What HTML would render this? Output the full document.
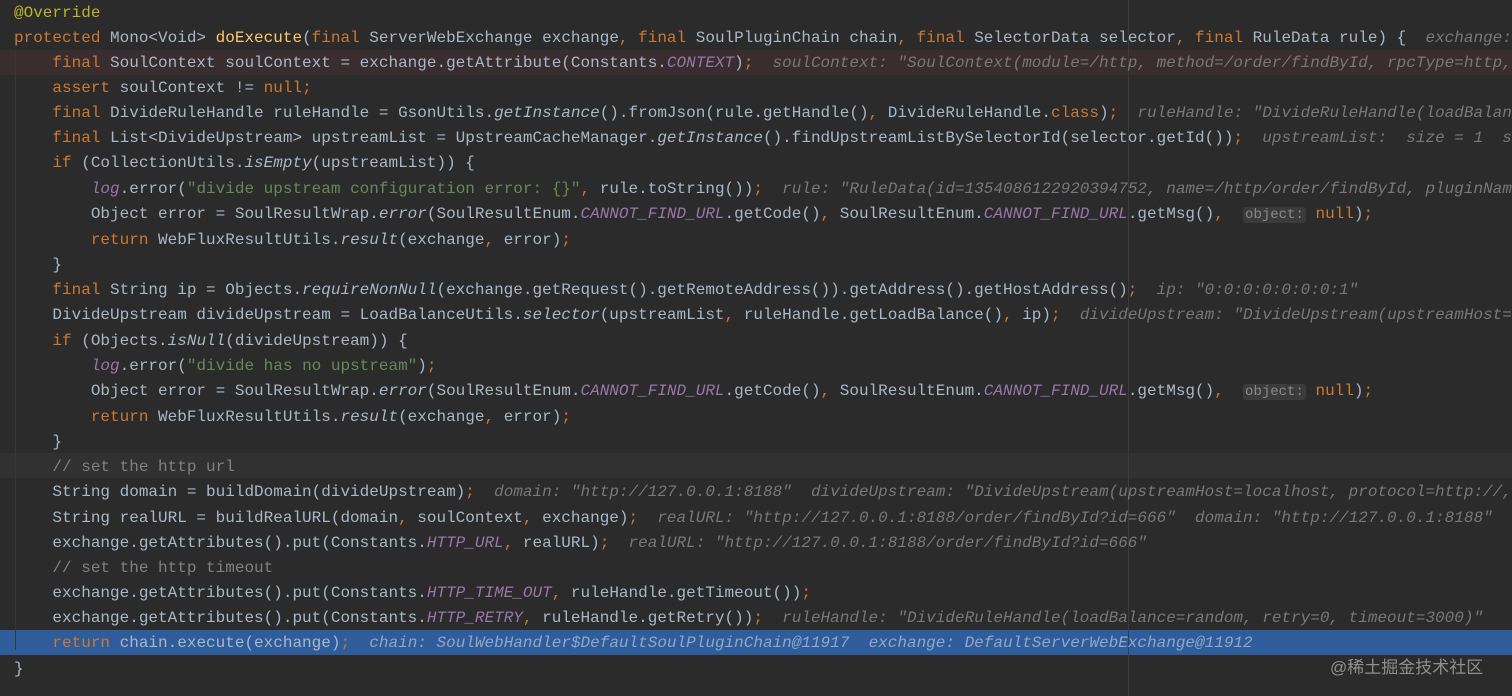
<!DOCTYPE html>
<html><head><meta charset="utf-8"><style>
html,body{margin:0;padding:0;background:#2b2b2b;width:1512px;height:696px;overflow:hidden}
.wrap{position:relative;width:1512px;height:696px}
pre{margin:0;position:absolute;left:14px;top:0.5px;font-family:"Liberation Mono","DejaVu Sans Mono",monospace;font-size:16px;line-height:25.15px;color:#a9b7c6;white-space:pre}
.k{color:#cc7832}.a{color:#bbb529}.m{color:#ffc66d}.s{color:#6a8759}.i{font-style:italic}
.c{color:#9876aa;font-style:italic}.cm{color:#808080}.h{color:#787878;font-style:italic}
.o{background:#3b3b3b;color:#8a8a8a;border-radius:3px;font-size:14px;padding:0 2px}
.band{position:absolute;left:0;width:1512px;height:25px}
.wm{position:absolute;left:1330px;top:653px;color:#8e8e8e;font-family:"Liberation Sans","Noto Sans CJK SC",sans-serif;font-size:17px}
</style></head><body><div class="wrap">
<div class="band" style="top:50px;background:#3a2d2f"></div>
<div class="band" style="top:453px;background:#313131"></div>
<div class="band" style="top:630px;background:#2f5d9c"></div>
<div style="position:absolute;left:1128px;top:0;width:1px;height:696px;background:#3c3c3c"></div>
<div style="position:absolute;left:15px;top:50px;width:1px;height:600px;background:#373737"></div>
<pre><span class="a">@Override</span>
<span class="k">protected </span>Mono&lt;Void&gt; <span class="m">doExecute</span>(<span class="k">final </span>ServerWebExchange exchange<span class="k">, final </span>SoulPluginChain chain<span class="k">, final </span>SelectorData selector<span class="k">, final </span>RuleData rule) {  <span class="h">exchange: </span>
    <span class="k">final </span>SoulContext soulContext = exchange.getAttribute(Constants.<span class="c">CONTEXT</span>)<span class="k">;</span>  <span class="h">soulContext: "SoulContext(module=/http, method=/order/findById, rpcType=http, </span>
    <span class="k">assert </span>soulContext != <span class="k">null;</span>
    <span class="k">final </span>DivideRuleHandle ruleHandle = GsonUtils.<span class="i">getInstance</span>().fromJson(rule.getHandle()<span class="k">, </span>DivideRuleHandle.<span class="k">class</span>)<span class="k">;</span>  <span class="h">ruleHandle: "DivideRuleHandle(loadBalan</span>
    <span class="k">final </span>List&lt;DivideUpstream&gt; upstreamList = UpstreamCacheManager.<span class="i">getInstance</span>().findUpstreamListBySelectorId(selector.getId())<span class="k">;</span>  <span class="h">upstreamList:  size = 1  s</span>
    <span class="k">if </span>(CollectionUtils.<span class="i">isEmpty</span>(upstreamList)) {
        <span class="c">log</span>.error(<span class="s">"divide upstream configuration error: {}"</span><span class="k">, </span>rule.toString())<span class="k">;</span>  <span class="h">rule: "RuleData(id=1354086122920394752, name=/http/order/findById, pluginNam</span>
        Object error = SoulResultWrap.<span class="i">error</span>(SoulResultEnum.<span class="c">CANNOT_FIND_URL</span>.getCode()<span class="k">, </span>SoulResultEnum.<span class="c">CANNOT_FIND_URL</span>.getMsg()<span class="k">, </span> <span class="o">object:</span> <span class="k">null</span>)<span class="k">;</span>
        <span class="k">return </span>WebFluxResultUtils.<span class="i">result</span>(exchange<span class="k">, </span>error)<span class="k">;</span>
    }
    <span class="k">final </span>String ip = Objects.<span class="i">requireNonNull</span>(exchange.getRequest().getRemoteAddress()).getAddress().getHostAddress()<span class="k">;</span>  <span class="h">ip: "0:0:0:0:0:0:0:1"</span>
    DivideUpstream divideUpstream = LoadBalanceUtils.<span class="i">selector</span>(upstreamList<span class="k">, </span>ruleHandle.getLoadBalance()<span class="k">, </span>ip)<span class="k">;</span>  <span class="h">divideUpstream: "DivideUpstream(upstreamHost=</span>
    <span class="k">if </span>(Objects.<span class="i">isNull</span>(divideUpstream)) {
        <span class="c">log</span>.error(<span class="s">"divide has no upstream"</span>)<span class="k">;</span>
        Object error = SoulResultWrap.<span class="i">error</span>(SoulResultEnum.<span class="c">CANNOT_FIND_URL</span>.getCode()<span class="k">, </span>SoulResultEnum.<span class="c">CANNOT_FIND_URL</span>.getMsg()<span class="k">, </span> <span class="o">object:</span> <span class="k">null</span>)<span class="k">;</span>
        <span class="k">return </span>WebFluxResultUtils.<span class="i">result</span>(exchange<span class="k">, </span>error)<span class="k">;</span>
    }
    <span class="cm">// set the http url</span>
    String domain = buildDomain(divideUpstream)<span class="k">;</span>  <span class="h">domain: "http://127.0.0.1:8188"  divideUpstream: "DivideUpstream(upstreamHost=localhost, protocol=http://,</span>
    String realURL = buildRealURL(domain<span class="k">, </span>soulContext<span class="k">, </span>exchange)<span class="k">;</span>  <span class="h">realURL: "http://127.0.0.1:8188/order/findById?id=666"  domain: "http://127.0.0.1:8188"</span>
    exchange.getAttributes().put(Constants.<span class="c">HTTP_URL</span><span class="k">, </span>realURL)<span class="k">;</span>  <span class="h">realURL: "http://127.0.0.1:8188/order/findById?id=666"</span>
    <span class="cm">// set the http timeout</span>
    exchange.getAttributes().put(Constants.<span class="c">HTTP_TIME_OUT</span><span class="k">, </span>ruleHandle.getTimeout())<span class="k">;</span>
    exchange.getAttributes().put(Constants.<span class="c">HTTP_RETRY</span><span class="k">, </span>ruleHandle.getRetry())<span class="k">;</span>  <span class="h">ruleHandle: "DivideRuleHandle(loadBalance=random, retry=0, timeout=3000)"</span>
    <span class="k">return </span>chain.execute(exchange)<span class="k">;</span>  <span class="h" style="color:#8fa7c8">chain: SoulWebHandler$DefaultSoulPluginChain@11917  exchange: DefaultServerWebExchange@11912</span>
}</pre>
<div class="wm">@稀土掘金技术社区</div>
</div></body></html>
